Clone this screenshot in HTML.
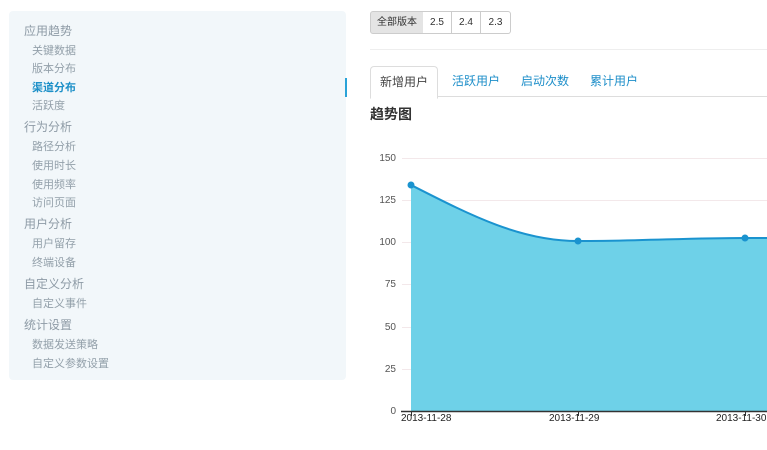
<!DOCTYPE html>
<html><head><meta charset="utf-8"><style>
body{margin:0;width:767px;height:450px;overflow:hidden;background:#fff;font-family:"Liberation Sans","Noto Sans CJK SC",sans-serif;position:relative}
.a{position:absolute;white-space:nowrap;line-height:14px}
.side{position:absolute;left:9px;top:11px;width:337px;height:369px;background:#f2f7fa;border-radius:4px}
.h{left:24px;font-size:12px;color:#8e9ba6}
.s{left:32px;font-size:11px;color:#93a0aa}
.btn{position:absolute;top:11px;height:21px;border:1px solid #ccc;font-size:10px;line-height:21px;text-align:center;color:#333;background:#fff;box-sizing:content-box}
.tab{position:absolute;top:66px;height:31px;line-height:31px;font-size:12px;color:#1d8ec9}
.yl{position:absolute;left:360px;width:36px;text-align:right;font-size:10px;color:#555}
.xl{position:absolute;top:413px;font-size:10px;color:#222}
</style></head><body>
<div class="side"></div>
<div style="position:absolute;left:345px;top:78px;width:2px;height:19px;background:#2aa3d8"></div>
<div class="a h" style="top:24px">应用趋势</div>
<div class="a s" style="top:44px">关键数据</div>
<div class="a s" style="top:62px">版本分布</div>
<div class="a s" style="top:81px;color:#1d90c8;font-weight:bold">渠道分布</div>
<div class="a s" style="top:99px">活跃度</div>
<div class="a h" style="top:120px">行为分析</div>
<div class="a s" style="top:140px">路径分析</div>
<div class="a s" style="top:159px">使用时长</div>
<div class="a s" style="top:178px">使用频率</div>
<div class="a s" style="top:196px">访问页面</div>
<div class="a h" style="top:217px">用户分析</div>
<div class="a s" style="top:237px">用户留存</div>
<div class="a s" style="top:256px">终端设备</div>
<div class="a h" style="top:277px">自定义分析</div>
<div class="a s" style="top:297px">自定义事件</div>
<div class="a h" style="top:318px">统计设置</div>
<div class="a s" style="top:338px">数据发送策略</div>
<div class="a s" style="top:357px">自定义参数设置</div>

<div class="btn" style="left:370px;width:52px;background:#e4e4e4;border-radius:3px 0 0 3px">全部版本</div>
<div class="btn" style="left:423px;width:28px;border-left:none">2.5</div>
<div class="btn" style="left:452px;width:28px;border-left:none">2.4</div>
<div class="btn" style="left:481px;width:29px;border-left:none;border-radius:0 3px 3px 0">2.3</div>
<div style="position:absolute;left:370px;top:49px;width:397px;height:1px;background:#eee"></div>
<div style="position:absolute;left:370px;top:96px;width:397px;height:1px;background:#ddd"></div>
<div class="tab" style="left:370px;width:66px;border:1px solid #ddd;border-bottom:1px solid #fff;border-radius:4px 4px 0 0;text-align:center;color:#444;background:#fff;height:31px">新增用户</div>
<div class="tab" style="left:452px">活跃用户</div>
<div class="tab" style="left:521px">启动次数</div>
<div class="tab" style="left:590px">累计用户</div>
<div class="a" style="left:370px;top:105px;font-size:14px;font-weight:bold;color:#333;line-height:18px">趋势图</div>

<svg style="position:absolute;left:0;top:0" width="767" height="450">
<g stroke="#f3e8ea" stroke-width="1">
<line x1="402" y1="158.5" x2="767" y2="158.5"/><line x1="402" y1="200.5" x2="767" y2="200.5"/>
<line x1="402" y1="242.5" x2="767" y2="242.5"/><line x1="402" y1="284.5" x2="767" y2="284.5"/>
<line x1="402" y1="327.5" x2="767" y2="327.5"/><line x1="402" y1="369.5" x2="767" y2="369.5"/>
</g>
<path d="M411 185 C470 215 520 241 578 241 C640 241 690 238 745 238 L767 238 L767 411 L411 411Z" fill="#6ed1e8"/>
<path d="M411 185 C470 215 520 241 578 241 C640 241 690 238 745 238 L767 238" fill="none" stroke="#1a93cf" stroke-width="2"/>
<circle cx="411" cy="185" r="3.5" fill="#1a93cf"/><circle cx="578" cy="241" r="3.5" fill="#1a93cf"/><circle cx="745" cy="238" r="3.5" fill="#1a93cf"/>
<line x1="401" y1="411.5" x2="767" y2="411.5" stroke="#333" stroke-width="1.5"/>
<line x1="411.5" y1="411" x2="411.5" y2="416" stroke="#333"/><line x1="578.5" y1="411" x2="578.5" y2="416" stroke="#333"/><line x1="745.5" y1="411" x2="745.5" y2="416" stroke="#333"/>
</svg>
<div class="yl" style="top:153px">150</div>
<div class="yl" style="top:195px">125</div>
<div class="yl" style="top:237px">100</div>
<div class="yl" style="top:279px">75</div>
<div class="yl" style="top:322px">50</div>
<div class="yl" style="top:364px">25</div>
<div class="yl" style="top:406px">0</div>
<div class="xl" style="left:401px">2013-11-28</div>
<div class="xl" style="left:549px">2013-11-29</div>
<div class="xl" style="left:716px">2013-11-30</div>
</body></html>
